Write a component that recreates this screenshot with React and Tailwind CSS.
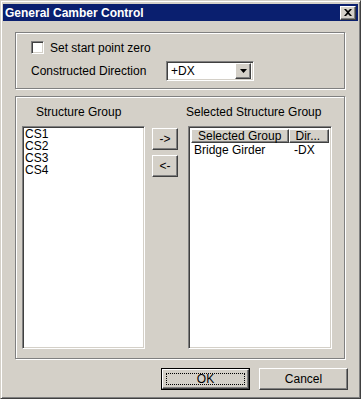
import React from "react";

const raised =
  "border border-t-white border-l-white border-r-[#404040] border-b-[#404040] shadow-[inset_-1px_-1px_0_#808080] bg-[#d4d0c8]";
const sunken =
  "border border-t-[#808080] border-l-[#808080] border-r-white border-b-white shadow-[inset_1px_1px_0_#404040,inset_-1px_-1px_0_#d4d0c8]";
const etched = "border border-[#808080] shadow-[inset_1px_1px_0_#fff,1px_1px_0_#fff]";

const Button = ({ children, className = "" }) => (
  <div className={`${raised} flex items-center justify-center ${className}`}>{children}</div>
);

export default function App() {
  return (
    <div
      className="w-[361px] h-[399px] bg-[#d4d0c8] text-black text-[12px] leading-[14px] border border-t-[#d4d0c8] border-l-[#d4d0c8] border-r-[#404040] border-b-[#404040] shadow-[inset_1px_1px_0_#fff,inset_-1px_-1px_0_#808080] pt-[3px] px-[2px] flex flex-col"
      style={{ fontFamily: '"Liberation Sans", Arial, sans-serif' }}
    >
      {/* title bar */}
      <div className="h-[17px] bg-[#0a1f6f] flex items-center justify-between pl-[2px] pr-[2px]">
        <span className="text-white font-bold text-[12px]">General Camber Control</span>
        <div className={`${raised} w-[16px] h-[14px] flex items-center justify-center`}>
          <svg width="8" height="7" viewBox="0 0 8 7">
            <path d="M0 0h2l2 2 2-2h2L5 3.5 8 7H6L4 5 2 7H0l3-3.5z" fill="#000" />
          </svg>
        </div>
      </div>

      {/* options group */}
      <div className={`${etched} ml-[12px] mt-[11px] w-[330px] h-[57px] pl-[15px] pt-[8px]`}>
        <div className="flex items-center h-[13px]">
          <div className={`${sunken} w-[13px] h-[13px] bg-white`} />
          <span className="ml-[6px]">Set start point zero</span>
        </div>
        <div className="flex items-center mt-[7px] h-[20px]">
          <span className="w-[135px]">Constructed Direction</span>
          <div className={`${sunken} w-[88px] h-[20px] bg-white flex items-center pl-[4px] pr-[2px]`}>
            <span className="flex-1">+DX</span>
            <Button className="w-[16px] h-[16px]">
              <svg width="7" height="4" viewBox="0 0 7 4">
                <path d="M0 0h7L3.5 4z" fill="#000" />
              </svg>
            </Button>
          </div>
        </div>
      </div>

      {/* structure group box */}
      <div className={`${etched} ml-[12px] mt-[7px] w-[330px] h-[263px] pl-[6px] pt-[8px] flex flex-col`}>
        <div className="flex h-[20px]">
          <span className="ml-[14px] w-[150px]">Structure Group</span>
          <span>Selected Structure Group</span>
        </div>
        <div className="flex mt-[1px]">
          <div className={`${sunken} w-[123px] h-[223px] bg-white px-[2px] pt-[1px] leading-[12px]`}>
            <div>CS1</div>
            <div>CS2</div>
            <div>CS3</div>
            <div>CS4</div>
          </div>
          <div className="ml-[7px] pt-[2px] flex flex-col gap-[5px]">
            <Button className="w-[26px] h-[22px]">-&gt;</Button>
            <Button className="w-[26px] h-[22px]">&lt;-</Button>
          </div>
          <div className={`${sunken} ml-[10px] w-[144px] h-[223px] bg-white p-[2px]`}>
            <div className="flex h-[14px]">
              <div className={`${raised} w-[99px] h-[14px] flex items-center pl-[6px] leading-[12px]`}>Selected Group</div>
              <div className={`${raised} w-[41px] h-[14px] flex items-center pl-[6px] leading-[12px]`}>Dir...</div>
            </div>
            <div className="flex mt-[1px] leading-[12px]">
              <span className="w-[103px] pl-[3px]">Bridge Girder</span>
              <span>-DX</span>
            </div>
          </div>
        </div>
      </div>

      {/* buttons */}
      <div className="flex mt-[9px] ml-[158px] gap-[9px]">
        <div className="w-[89px] h-[22px] border border-black">
          <div className={`${raised} w-full h-full flex items-center justify-center p-[3px]`}>
            <div className="w-full h-full border border-dotted border-black flex items-center justify-center">OK</div>
          </div>
        </div>
        <Button className="w-[89px] h-[22px]">Cancel</Button>
      </div>
    </div>
  );
}
